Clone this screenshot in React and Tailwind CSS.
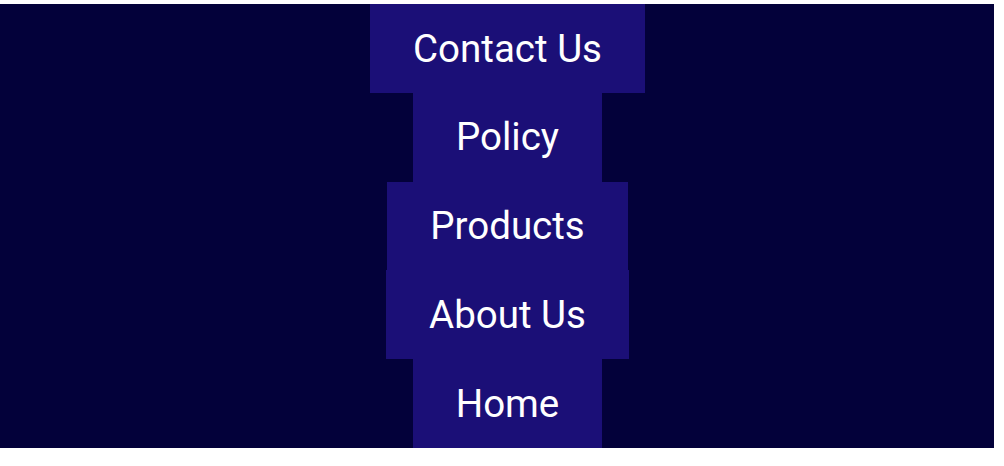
const links = ["Contact Us", "Policy", "Products", "About Us", "Home"];

export default function App() {
  return (
    <div className="h-[466px] w-[1004px] bg-white pt-1">
      <nav className="flex h-[444px] w-[994px] flex-col items-center bg-[#03013a] pl-[21px] font-['Roboto',sans-serif]">
        {links.map((label) => (
          <a
            key={label}
            href="#"
            className="flex flex-1 items-center justify-center bg-[#1b0f77] px-[43px] text-[38.5px] text-white"
          >
            {label}
          </a>
        ))}
      </nav>
    </div>
  );
}
